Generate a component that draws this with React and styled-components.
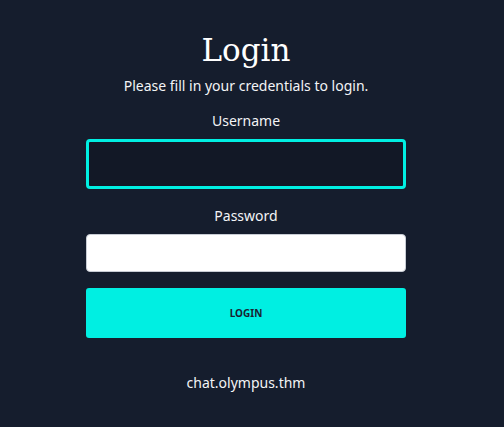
import React from 'react';
import styled, { createGlobalStyle } from 'styled-components';

const GlobalStyle = createGlobalStyle`
  html, body {
    margin: 0;
    padding: 0;
    background: #151d2d;
  }
  * {
    box-sizing: border-box;
  }
`;

const Page = styled.div`
  width: 492px;
  height: 427px;
  background: #151d2d;
  display: flex;
  flex-direction: column;
  align-items: center;
  padding-top: 30px;
  font-family: 'Noto Sans', 'Open Sans', sans-serif;
  color: #f3f4f6;
`;

const Title = styled.h1`
  margin: 0;
  font-family: 'DejaVu Serif', 'Liberation Serif', serif;
  font-weight: 400;
  font-size: 31px;
  line-height: 40px;
  color: #ffffff;
`;

const Subtitle = styled.p`
  margin: 6px 0 0;
  font-size: 14px;
  line-height: 20px;
`;

const Form = styled.form`
  width: 320px;
  display: flex;
  flex-direction: column;
  align-items: stretch;
  margin-top: 15px;
`;

const Label = styled.label`
  display: block;
  text-align: center;
  font-size: 14px;
  line-height: 20px;
  margin-bottom: 8px;
`;

const Field = styled.div`
  margin-bottom: ${(p) => p.gap || 16}px;
`;

const Input = styled.input`
  display: block;
  width: 100%;
  height: ${(p) => (p.focused ? 50 : 38)}px;
  border-radius: 4px;
  border: ${(p) => (p.focused ? '3px solid #00efe2' : '1px solid #c7ccd4')};
  background: ${(p) => (p.focused ? '#121826' : '#ffffff')};
  outline: none;
  font-family: inherit;
  font-size: 14px;
  padding: 0 10px;
`;

const Button = styled.button`
  width: 100%;
  height: 50px;
  border: none;
  border-radius: 3px;
  background: #00efe2;
  color: #1a2333;
  font-family: 'Noto Sans', 'Open Sans', sans-serif;
  font-weight: 700;
  font-size: 10px;
  cursor: pointer;
`;

const Footer = styled.p`
  margin: 35px 0 0;
  font-size: 14px;
  line-height: 20px;
`;

export default function App() {
  return (
    <>
      <GlobalStyle />
      <Page>
        <Title>Login</Title>
        <Subtitle>Please fill in your credentials to login.</Subtitle>
        <Form onSubmit={(e) => e.preventDefault()}>
          <Field gap={17}>
            <Label htmlFor="username">Username</Label>
            <Input id="username" type="text" focused />
          </Field>
          <Field gap={16}>
            <Label htmlFor="password">Password</Label>
            <Input id="password" type="password" />
          </Field>
          <Button type="submit">LOGIN</Button>
        </Form>
        <Footer>chat.olympus.thm</Footer>
      </Page>
    </>
  );
}
